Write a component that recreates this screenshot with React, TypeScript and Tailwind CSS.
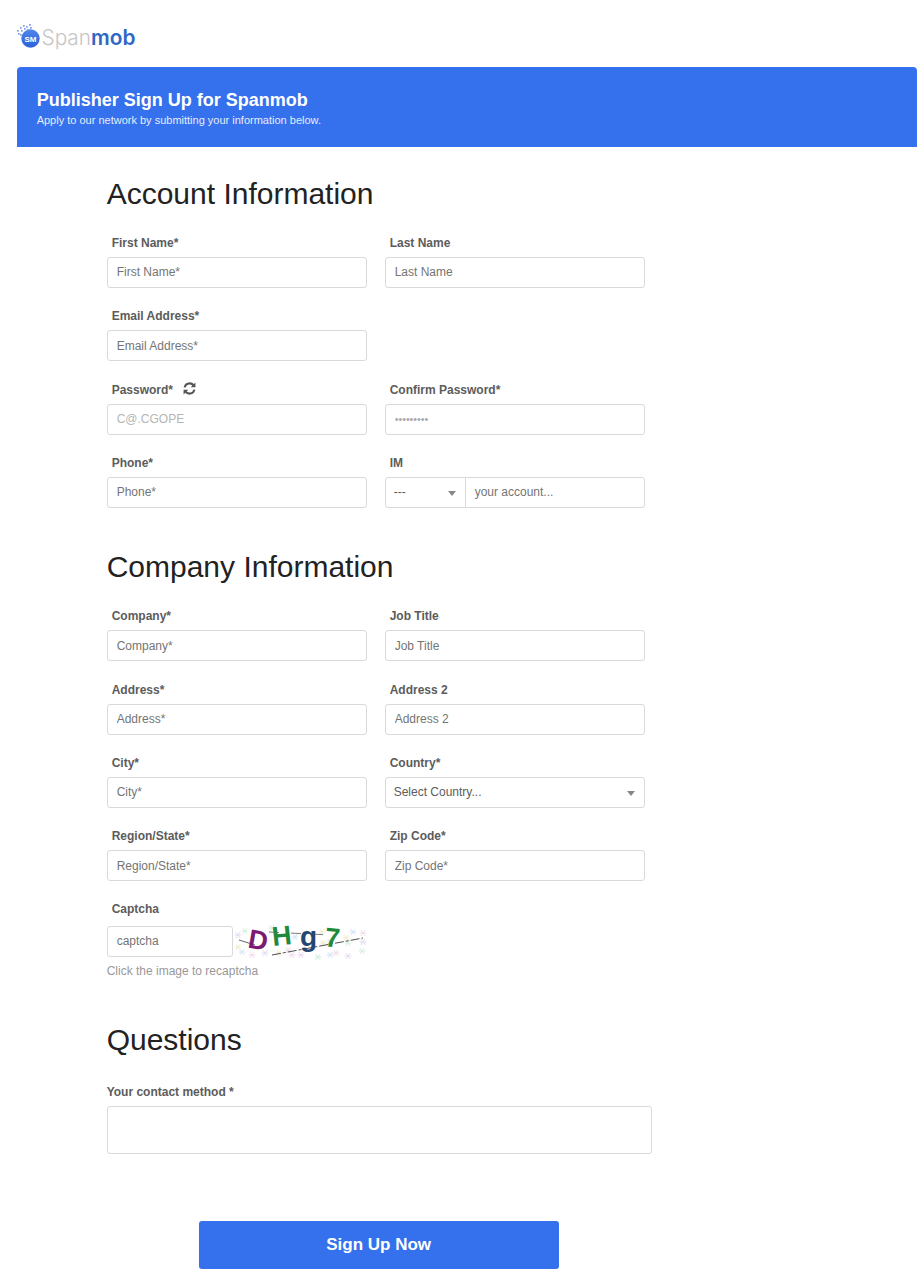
import React from 'react';

const labelClass = 'block h-[22px] pl-[5px] text-[12px] leading-[16px] font-bold text-[#5c5c5c]';
const inputClass = 'block h-[31px] w-full rounded-[3px] border border-[#d9d9d9] bg-white px-[9px] text-[12px] text-[#5c5c5c] placeholder:text-[#757575] outline-none';

const Field: React.FC<{ label: string; placeholder?: string }> = ({ label, placeholder }) => (
  <div className="w-[260px]">
    <label className={labelClass}>{label}</label>
    <input className={inputClass} placeholder={placeholder ?? label} />
  </div>
);

const Row: React.FC<{ children: React.ReactNode }> = ({ children }) => (
  <div className="mb-[20.33px] flex gap-[18px]">{children}</div>
);

const Caret = () => <span className="absolute top-[13px] right-[9px] h-0 w-0 border-x-[4px] border-t-[5px] border-x-transparent border-t-[#888888]" />;

const dots = [[0, 6], [3, 3], [6, 1], [9, 2], [12, 0], [1, 9], [4, 6], [7, 4], [10, 5], [3, 10], [13, 3]];

const Logo = () => (
  <div className="flex h-[67px] items-start pt-[24px] pl-[17px]">
    <svg width="24" height="25" viewBox="0 0 24 25">
      <defs>
        <linearGradient id="logoBlue" x1="0" y1="0" x2="0" y2="1">
          <stop offset="0" stopColor="#4f86ea" />
          <stop offset="1" stopColor="#2c62d8" />
        </linearGradient>
      </defs>
      <circle cx="13.5" cy="14.5" r="9.2" fill="url(#logoBlue)" />
      <text x="13.5" y="17.5" textAnchor="middle" fontSize="8" fontWeight="bold" fontFamily="Liberation Sans" fill="#fff">SM</text>
      {dots.map(([x, y]) => (
        <rect key={`${x}-${y}`} x={x} y={y} width="1.7" height="1.7" fill="#7f9fe6" />
      ))}
    </svg>
    <span className="ml-[0.5px] text-[20.8px] leading-[28px] [font-family:'Inter',sans-serif]">
      <span className="font-light text-[#c6c6c6]">Span</span>
      <span className="font-semibold text-[#2f68c4]">mob</span>
    </span>
  </div>
);

const flakes = [
  [2, 13], [9, 9], [2, 25], [6, 30], [16, 33], [29, 31], [36, 6], [43, 31], [59, 15], [56, 33], [65, 33], [82, 35], [86, 10],
  [94, 33], [100, 31], [112, 34], [112, 21], [110, 16], [117, 10], [127, 11], [127, 20], [126, 29], [87, 21], [94, 20], [52, 28],
];
const flakeColors = ['#e6daf0', '#d6efdf', '#f1ebd2', '#d6e4f6', '#efdcea'];

const Captcha = () => (
  <svg width="132" height="40" viewBox="0 0 132 40" className="ml-[3px] overflow-visible">
    {flakes.map(([x, y], i) => (
      <path
        key={i}
        d={`M${x - 3.5} ${y}h7M${x - 2.2} ${y - 3}l4.4 6M${x + 2.2} ${y - 3}l-4.4 6`}
        stroke={flakeColors[i % 5]}
        strokeWidth="1"
        fill="none"
      />
    ))}
    <path d="M3 18L19 23" stroke="#222" strokeWidth="0.7" fill="none" />
    <path d="M36 33L127 16" stroke="#222" strokeWidth="0.8" strokeDasharray="9 2 3 2" fill="none" />
    <path d="M33 10L95 13" stroke="#222" strokeWidth="0.6" strokeDasharray="10 12" fill="none" />
    <text x="12.5" y="27" fontSize="27" fontWeight="bold" fontFamily="Liberation Sans" fill="#7a1a72" transform="rotate(10 20 18)">D</text>
    <text x="36" y="23" fontSize="27" fontWeight="bold" fontFamily="Liberation Sans" fill="#1f8a3c" transform="rotate(-6 46 14)">H</text>
    <text x="64" y="24" fontSize="28" fontWeight="bold" fontFamily="Liberation Sans" fill="#25466e">g</text>
    <text x="89" y="25" fontSize="27" fontWeight="bold" fontFamily="Liberation Sans" fill="#1f8a3c" transform="rotate(5 96 16)">7</text>
  </svg>
);

const Heading: React.FC<{ children: React.ReactNode }> = ({ children }) => (
  <h2 className="h-[68px] pt-[9px] text-[30px] leading-[36px] font-normal text-[#222222]">{children}</h2>
);

const RefreshIcon = () => (
  <svg width="13" height="13" viewBox="0 0 12 12" className="ml-[9.5px]" fill="none" stroke="#555555" strokeWidth="1.9">
    <path d="M1.5 5A4.6 4.6 0 0 1 10 3.6" />
    <path d="M10.5 7A4.6 4.6 0 0 1 2 8.4" />
    <path d="M11.5 .5v4.4H7.1z" fill="#555555" stroke="none" />
    <path d="M.5 11.5V7.1h4.4z" fill="#555555" stroke="none" />
  </svg>
);

export default function App() {
  return (
    <div className="min-h-[1276px] bg-white [font-family:'Liberation_Sans',Arial,sans-serif]">
      <Logo />
      <div className="ml-[17px] mr-[5px] h-[80px] rounded-t-[4px] bg-[#3570ed] px-[19.67px] pt-[23px] text-white">
        <h1 className="text-[18px] leading-[20px] font-bold">Publisher Sign Up for Spanmob</h1>
        <p className="mt-[2px] text-[11px] leading-[16px] text-[#e6edfc]">Apply to our network by submitting your information below.</p>
      </div>

      <main className="pl-[106.67px]">
        <section className="pt-[19.9px]">
          <Heading>Account Information</Heading>
          <Row>
            <Field label="First Name*" />
            <Field label="Last Name" />
          </Row>
          <Row>
            <Field label="Email Address*" />
          </Row>
          <Row>
            <div className="w-[260px]">
              <label className={`${labelClass} flex items-start`}>
                Password*
                <RefreshIcon />
              </label>
              <input className={`${inputClass} placeholder:text-[#b5b5b5]`} placeholder="C@.CGOPE" />
            </div>
            <div className="w-[260px]">
              <label className={labelClass}>Confirm Password*</label>
              <input className={`${inputClass} placeholder:text-[10.7px] placeholder:text-[#a8a8a8]`} placeholder="•••••••••" />
            </div>
          </Row>
          <Row>
            <Field label="Phone*" />
            <div className="w-[260px]">
              <label className={labelClass}>IM</label>
              <div className="flex h-[31px] rounded-[3px] border border-[#d9d9d9]">
                <div className="relative w-[80px] border-r border-[#d9d9d9] pl-[8px] text-[12px] leading-[29px] text-[#5c5c5c]">
                  ---
                  <Caret />
                </div>
                <div className="pl-[9px] text-[12px] leading-[29px] text-[#757575]">your account...</div>
              </div>
            </div>
          </Row>
        </section>

        <section className="pt-[12px]">
          <Heading>Company Information</Heading>
          <Row>
            <Field label="Company*" />
            <Field label="Job Title" />
          </Row>
          <Row>
            <Field label="Address*" />
            <Field label="Address 2" />
          </Row>
          <Row>
            <Field label="City*" />
            <div className="w-[260px]">
              <label className={labelClass}>Country*</label>
              <div className="relative h-[31px] rounded-[3px] border border-[#d9d9d9] pl-[8px] text-[12px] leading-[29px] text-[#5c5c5c]">
                Select Country...
                <Caret />
              </div>
            </div>
          </Row>
          <Row>
            <Field label="Region/State*" />
            <Field label="Zip Code*" />
          </Row>
          <div className="-mt-[1px] w-[260px]">
            <label className={`${labelClass} !h-[21px]`}>Captcha</label>
            <div className="flex items-start">
              <input className={`${inputClass} mt-[4px] !w-[126px] shrink-0 placeholder:text-[#666666]`} placeholder="captcha" />
              <Captcha />
            </div>
            <p className="mt-[1px] text-[12px] leading-[16px] text-[#999999]">Click the image to recaptcha</p>
          </div>
        </section>

        <section className="pt-[34px]">
          <Heading>Questions</Heading>
          <label className="mt-[3px] block h-[22px] text-[12px] leading-[16px] font-bold text-[#5c5c5c]">Your contact method *</label>
          <textarea className="block h-[48px] w-[545px] resize-none rounded-[3px] border border-[#d9d9d9] outline-none" />
        </section>

        <button className="mt-[67px] ml-[92px] block h-[48px] w-[360px] rounded-[3px] bg-[#3570ed] text-[17px] font-bold text-white">Sign Up Now</button>
      </main>
    </div>
  );
}
